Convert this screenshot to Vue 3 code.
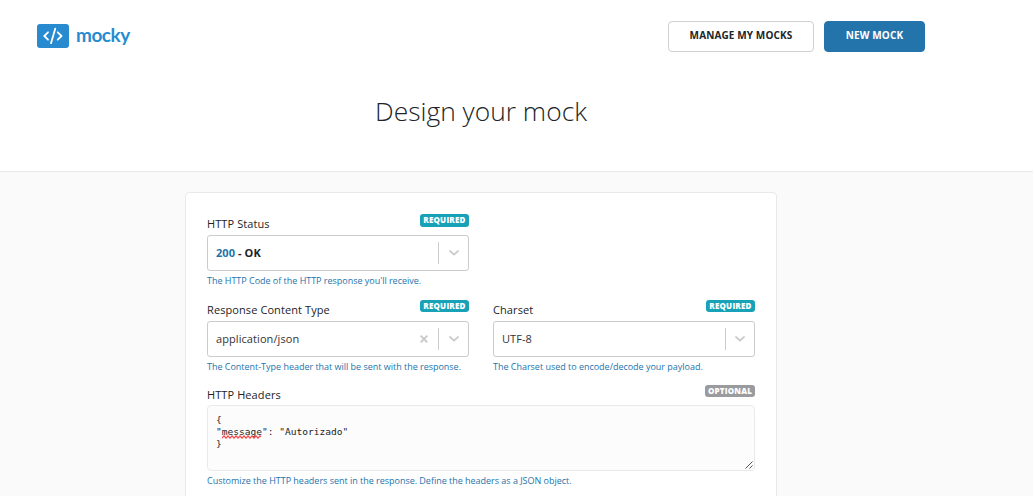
<script setup>
const rows = [
  [
    {
      label: 'HTTP Status',
      code: '200',
      value: 'OK',
      help: "The HTTP Code of the HTTP response you'll receive.",
      cls: 'status'
    }
  ],
  [
    {
      label: 'Response Content Type',
      value: 'application/json',
      clearable: true,
      help: 'The Content-Type header that will be sent with the response.',
      cls: 'content-type'
    },
    {
      label: 'Charset',
      value: 'UTF-8',
      help: 'The Charset used to encode/decode your payload.',
      cls: 'charset'
    }
  ]
]
</script>

<template>
  <div class="page">
    <header class="nav">
      <a class="logo">
        <svg width="32" height="24" viewBox="0 0 32 24">
          <rect width="32" height="24" rx="3" fill="#288bd0" />
          <g fill="none" stroke="#fff" stroke-width="1.8" stroke-linecap="round" stroke-linejoin="round">
            <path d="M11 8.3 7.3 12l3.7 3.7M20.7 8.3l3.8 3.7-3.8 3.7M18.3 4.6l-4.3 14.6" />
          </g>
        </svg>
        <span>mocky</span>
      </a>
      <div class="actions">
        <button class="btn outline"><span>MANAGE MY MOCKS</span></button>
        <button class="btn primary"><span>NEW MOCK</span></button>
      </div>
    </header>
    <div class="hero"><h1>Design your mock</h1></div>
    <main>
      <section class="card">
        <div v-for="(row, i) in rows" :key="i" class="row">
          <div v-for="f in row" :key="f.label" class="field" :class="f.cls">
            <div class="head">
              <label><span>{{ f.label }}</span></label>
              <span class="badge">REQUIRED</span>
            </div>
            <div class="select">
              <span class="value"><b v-if="f.code"><i>{{ f.code }}</i> - {{ f.value }}</b><template v-else>{{ f.value }}</template></span>
              <svg v-if="f.clearable" class="clear" width="8" height="8" viewBox="0 0 8 8">
                <path d="M.7 .7l6.6 6.6M7.3 .7L.7 7.3" fill="none" stroke="#c8c8c8" stroke-width="1.9" />
              </svg>
              <span class="sep"></span>
              <svg class="chev" width="10" height="6" viewBox="0 0 10 6">
                <path d="M1 1l4 3.7L9 1" fill="none" stroke="#ccc" stroke-width="1.8" stroke-linecap="round" stroke-linejoin="round" />
              </svg>
            </div>
            <div class="help"><span>{{ f.help }}</span></div>
          </div>
        </div>
        <div class="field headers">
          <div class="head">
            <label><span>HTTP Headers</span></label>
            <span class="badge optional">OPTIONAL</span>
          </div>
          <div class="area">
            <div class="code">
              <div>{</div>
              <div class="line"><span>"</span><span class="typo">message<svg class="wave" width="41" height="4" viewBox="0 0 41 4"><path d="M0 3.2l2-2.4 2 2.4 2-2.4 2 2.4 2-2.4 2 2.4 2-2.4 2 2.4 2-2.4 2 2.4 2-2.4 2 2.4 2-2.4 2 2.4 2-2.4 2 2.4 2-2.4 2 2.4 2-2.4 1 1.2" fill="none" stroke="#f44" stroke-width="1.1" /></svg></span><span>": "Autorizado"</span></div>
              <div>}</div>
            </div>
            <svg class="grip" width="8" height="8" viewBox="0 0 8 8">
              <path d="M.5 7.5l7-7M4.5 7.5l3-3" fill="none" stroke="#555" stroke-width="1" />
            </svg>
          </div>
          <div class="help"><span>Customize the HTTP headers sent in the response. Define the headers as a JSON object.</span></div>
        </div>
      </section>
    </main>
  </div>
</template>

<style>
body {
  overflow: hidden;
}
</style>

<style scoped>
* {
  box-sizing: border-box;
}
.page {
  height: 496px;
  overflow: hidden;
  background: #fff;
  color: #212529;
  font-family: "Open Sans", "Noto Sans", sans-serif;
  display: flex;
  flex-direction: column;
}
.nav {
  flex: none;
  height: 72px;
  padding: 0 108px 0 37px;
  display: flex;
  align-items: center;
  justify-content: space-between;
}
.logo {
  display: flex;
  align-items: center;
  gap: 7px;
  color: #288bd0;
  font: 700 19px/24px Lato, sans-serif;
  letter-spacing: -0.5px;
}
.logo span {
  margin-top: -3px;
}
.actions {
  display: flex;
  gap: 10px;
}
.btn {
  height: 31px;
  padding: 0 0 2px;
  border: 1px solid #ced0d2;
  border-radius: 4px;
  background: #fff;
  color: #212529;
  font: 700 10px/14px "Open Sans", sans-serif;
  letter-spacing: 0.12px;
  white-space: nowrap;
}
.outline {
  width: 146px;
}
.primary {
  width: 101px;
  color: #fff;
  background: #2474ac;
  border-color: #2474ac;
}
.hero {
  flex: none;
  height: 100px;
  border-bottom: 1px solid #e9e9e9;
  padding: 20px 71px 0 0;
  text-align: center;
}
h1 {
  margin: 0;
  font-size: 26.4px;
  line-height: 38px;
  font-weight: 300;
}
main {
  flex: 1;
  min-height: 0;
  background: #fafafa;
  padding: 20px 0 0 185px;
}
.card {
  width: 592px;
  height: 340px;
  background: #fff;
  border: 1px solid #e9e9e9;
  border-radius: 4px;
  padding: 21px;
}
.row {
  height: 86px;
  display: grid;
  grid-template-columns: 262px 262px;
  gap: 24px;
}
.head {
  height: 21px;
  display: flex;
  justify-content: space-between;
  align-items: flex-start;
}
label {
  font-size: 11px;
  line-height: 15px;
  letter-spacing: 0.09px;
  margin-top: 2px;
}
.badge {
  width: 49px;
  height: 12px;
  border-radius: 3px;
  background: #17a2b8;
  color: #fff;
  font-size: 8px;
  line-height: 12px;
  font-weight: 800;
  letter-spacing: 0.2px;
  text-align: center;
  white-space: nowrap;
}
.status .badge {
  height: 13px;
}
.optional {
  width: 50px;
  background: #999b9e;
}
.select {
  height: 36px;
  border: 1px solid #ccc;
  border-radius: 3px;
  padding: 0 9px 0 8px;
  display: flex;
  align-items: center;
}
.value {
  flex: 1;
  font-size: 11px;
  line-height: 15px;
  letter-spacing: 0.08px;
  margin-top: -2px;
  color: #333;
}
.value b {
  color: #212529;
}
.value i {
  font-style: normal;
  color: #2474ac;
}
.clear {
  margin-right: 10px;
}
.sep {
  width: 1px;
  height: 22px;
  background: #ccc;
  margin-right: 10px;
}
.charset .sep {
  margin-right: 9px;
}
.help {
  color: #2474ac;
  font-size: 9px;
  line-height: 13px;
  letter-spacing: -0.02px;
  padding-top: 3px;
  white-space: nowrap;
}
.headers .head {
  height: 20px;
}
.headers {
  margin-top: -1px;
}
.area {
  position: relative;
  height: 66px;
  border: 1px solid #e9e9e9;
  border-radius: 4px;
  background: #fcfcfc;
  padding: 8px;
}
.code {
  font: 9.55px/12px "DejaVu Sans Mono", monospace;
  color: #212529;
}
.line {
  display: flex;
  white-space: pre;
}
.typo {
  position: relative;
}
.wave {
  position: absolute;
  left: 0;
  top: 9px;
}
.grip {
  position: absolute;
  right: 1px;
  bottom: 1px;
}
</style>
